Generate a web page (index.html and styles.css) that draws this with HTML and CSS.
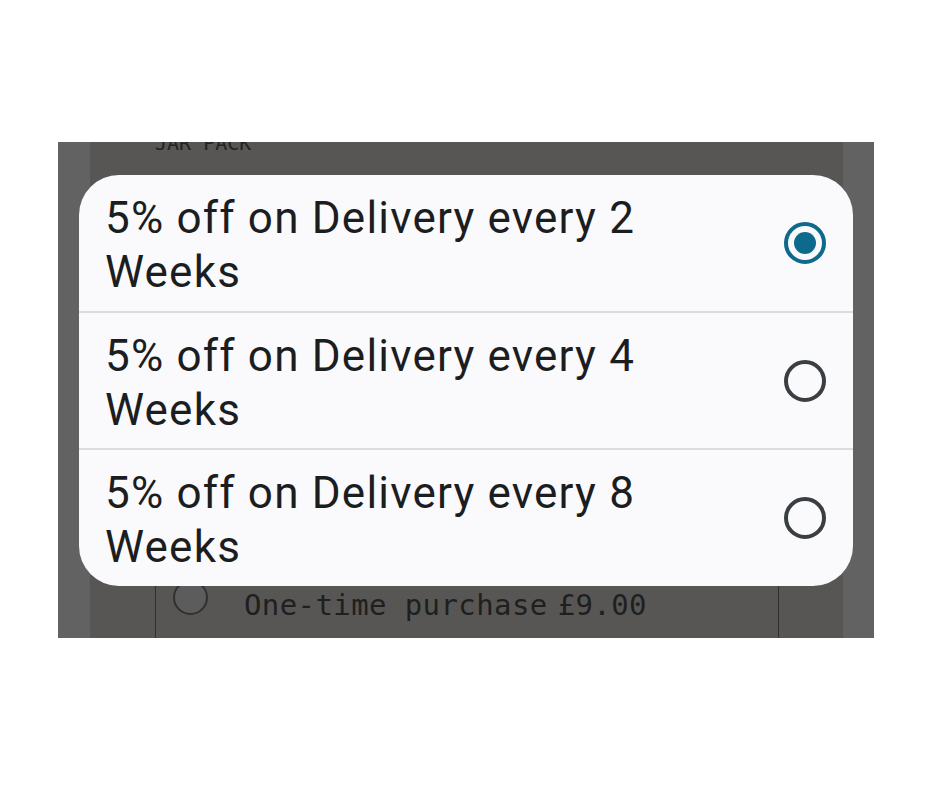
FILE: index.html
```html
<!DOCTYPE html>
<html>
<head>
  <meta charset="utf-8">
  <title>Subscription options</title>
  <link rel="stylesheet" href="styles.css">
</head>
<body>
  <div class="shot">
    <div class="page">
      <div class="label">JAR PACK</div>
      <div class="card">
        <div class="card-row">
          <span class="card-radio"></span>
          <span class="card-text">One-time purchase</span>
          <span class="card-price">£9.00</span>
        </div>
      </div>
    </div>

    <div class="dialog">
      <div class="option">
        <div class="option-text">5% off on Delivery every 2 Weeks</div>
        <span class="radio checked"></span>
      </div>
      <div class="option">
        <div class="option-text">5% off on Delivery every 4 Weeks</div>
        <span class="radio"></span>
      </div>
      <div class="option">
        <div class="option-text">5% off on Delivery every 8 Weeks</div>
        <span class="radio"></span>
      </div>
    </div>
  </div>
</body>
</html>
```

FILE: styles.css
```css
* {
  margin: 0;
  padding: 0;
  box-sizing: border-box;
}
body {
  background: #fff;
  font-family: Roboto, "Noto Sans", sans-serif;
}
.shot {
  width: 816px;
  height: 496px;
  margin: 142px 0 0 58px;
  background: #626262;
  position: relative;
  overflow: hidden;
  display: flex;
}
.page {
  flex: 1;
  margin: 0 31px 0 32px;
  background: #575654;
  display: flex;
  flex-direction: column;
}
.label {
  margin: -11px 0 0 65px;
  font-family: "DejaVu Sans Mono", monospace;
  font-size: 20px;
  color: #232323;
}
.card {
  margin: 40px 64px 0 65px;
  flex: 1;
  border: 1px solid #2f2f2f;
  border-bottom: 0;
  display: flex;
  flex-direction: column;
  justify-content: flex-end;
  padding-bottom: 13px;
}
.card-row {
  display: flex;
  align-items: center;
  height: 40px;
  padding-left: 17px;
}
.card-radio {
  width: 35px;
  height: 35px;
  border: 2px solid #303030;
  border-radius: 50%;
  background: #5c5c5c;
  margin-top: -16px;
}
.card-text,
.card-price {
  font-family: "DejaVu Sans Mono", monospace;
  font-size: 29px;
  letter-spacing: 0.4px;
  color: #1f1f1f;
}
.card-text {
  margin-left: 36px;
}
.card-price {
  margin-left: 10px;
}
.dialog {
  position: absolute;
  left: 21px;
  top: 33px;
  width: 774px;
  height: 411px;
  background: #fafafc;
  border-radius: 40px;
  display: flex;
  flex-direction: column;
  overflow: hidden;
}
.option {
  flex: 1;
  display: flex;
  align-items: center;
  padding: 4px 27px 0 26px;
  border-bottom: 2px solid #dcdcde;
}
.option:last-child {
  border-bottom: 0;
}
.option-text {
  width: 600px;
  font-size: 44px;
  letter-spacing: 1.2px;
  line-height: 54px;
  color: #1c1d1f;
}
.radio {
  margin-left: auto;
  margin-top: -4px;
  width: 42px;
  height: 42px;
  border: 4px solid #3a3d41;
  border-radius: 50%;
  display: flex;
  align-items: center;
  justify-content: center;
}
.radio.checked {
  border-color: #0d6a8c;
}
.radio.checked::after {
  content: "";
  width: 22px;
  height: 22px;
  border-radius: 50%;
  background: #0d6a8c;
}
```
